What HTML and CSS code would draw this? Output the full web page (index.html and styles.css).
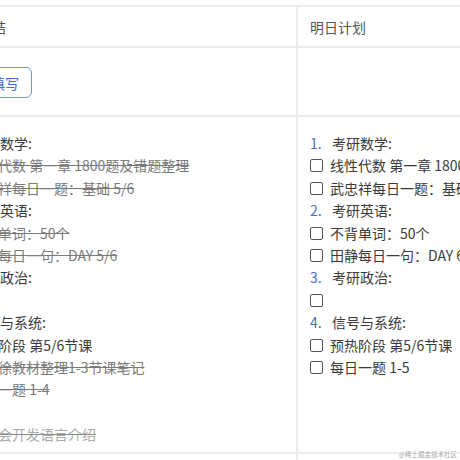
FILE: index.html
```html
<!DOCTYPE html>
<html lang="zh-CN">
<head>
    <meta charset="UTF-8">
    <meta name="viewport" content="width=device-width, initial-scale=1.0">
    <title>学习计划</title>
    <link rel="stylesheet" href="styles.css">
</head>
<body>
    <div class="page">
        <table class="plan">
            <colgroup>
                <col class="col-today">
                <col class="col-tomorrow">
            </colgroup>
            <thead>
                <tr>
                    <th>今日总结</th>
                    <th>明日计划</th>
                </tr>
            </thead>
            <tbody>
                <tr class="action-row">
                    <td><button class="fill-btn" type="button">点击填写</button></td>
                    <td></td>
                </tr>
                <tr class="list-row">
                    <td>
                        <ul class="tasks">
                            <li class="group"><span class="num">1.</span>考研数学:</li>
                            <li class="done"><span class="box checked"></span>线性代数 第一章 1800题及错题整理</li>
                            <li class="done"><span class="box checked"></span>武忠祥每日一题：基础 5/6</li>
                            <li class="group"><span class="num">2.</span>考研英语:</li>
                            <li class="done"><span class="box checked"></span>不背单词：50个</li>
                            <li class="done"><span class="box checked"></span>田静每日一句：DAY 5/6</li>
                            <li class="group"><span class="num">3.</span>考研政治:</li>
                            <li><span class="box"></span></li>
                            <li class="group"><span class="num">4.</span>信号与系统:</li>
                            <li><span class="box"></span>预热阶段 第5/6节课</li>
                            <li class="done"><span class="box checked"></span>对照徐教材整理1-3节课笔记</li>
                            <li class="done"><span class="box checked"></span>每日一题 1-4</li>
                            <li class="group"><span class="num">5.</span>其他</li>
                            <li class="done faded"><span class="box checked"></span>华为会开发语言介绍</li>
                        </ul>
                    </td>
                    <td>
                        <ul class="tasks">
                            <li class="group"><span class="num">1.</span>考研数学:</li>
                            <li><span class="box"></span>线性代数 第一章 1800题及错题整理</li>
                            <li><span class="box"></span>武忠祥每日一题：基础 6/6</li>
                            <li class="group"><span class="num">2.</span>考研英语:</li>
                            <li><span class="box"></span>不背单词：50个</li>
                            <li><span class="box"></span>田静每日一句：DAY 6/6</li>
                            <li class="group"><span class="num">3.</span>考研政治:</li>
                            <li><span class="box"></span></li>
                            <li class="group"><span class="num">4.</span>信号与系统:</li>
                            <li><span class="box"></span>预热阶段 第5/6节课</li>
                            <li><span class="box"></span>每日一题 1-5</li>
                        </ul>
                    </td>
                </tr>
                <tr class="tail-row">
                    <td></td>
                    <td></td>
                </tr>
            </tbody>
        </table>
        <span class="watermark">@稀土掘金技术社区</span>
    </div>
</body>
</html>
```

FILE: styles.css
```css
:root {
    --line-color: #ececec;
    --text-color: #3a3a3a;
    --muted-color: #7a7a7a;
    --blue: #4a6dc2;
    --btn-blue: #3c6fd8;
}

* {
    margin: 0;
    padding: 0;
    box-sizing: border-box;
}

body {
    font-family: "Noto Sans CJK SC", "Noto Sans", sans-serif;
    font-size: 14px;
    color: var(--text-color);
    background: #fff;
    overflow: hidden;
}

.page {
    position: relative;
    width: 460px;
    height: 460px;
    padding-top: 5px;
    overflow: hidden;
}

.plan {
    margin-left: -64px;
    width: 820px;
    table-layout: fixed;
    border-collapse: separate;
    border-spacing: 0;
    border-top: 2px solid var(--line-color);
}

.col-today {
    width: 362px;
}

.plan th,
.plan td {
    text-align: left;
    vertical-align: top;
    font-weight: normal;
    border-bottom: 2px solid var(--line-color);
    padding: 0 13px 0 14px;
}

.plan th:first-child,
.plan td:first-child {
    border-right: 2px solid var(--line-color);
}

.plan th + th,
.plan td + td {
    padding-left: 12px;
}

.plan th {
    line-height: 22px;
    padding-top: 9px;
    padding-bottom: 8px;
    color: #555;
}

.action-row td {
    padding-top: 19px;
    padding-bottom: 17px;
    height: 69px;
}

.fill-btn {
    height: 31px;
    padding: 0 12px;
    font-family: inherit;
    font-size: 14px;
    color: var(--btn-blue);
    background: #fff;
    border: 1px solid #7094de;
    border-radius: 6px;
}

.list-row td {
    padding-top: 15px;
    padding-bottom: 7px;
}

.tail-row td {
    height: 30px;
}

.tasks {
    list-style: none;
    line-height: 22.4px;
    white-space: nowrap;
}

.tasks li {
    height: 22.4px;
}

.num {
    display: inline-block;
    width: 22px;
    color: var(--blue);
}

.box {
    display: inline-block;
    width: 13px;
    height: 13px;
    margin-right: 7px;
    border: 1px solid #555;
    border-radius: 2px;
    vertical-align: -1px;
}

.box.checked {
    background: var(--blue);
    border-color: var(--blue);
}

.done {
    color: var(--muted-color);
    text-decoration: line-through;
}

.faded {
    color: #aaa;
    text-decoration: line-through #888 1px;
}

.watermark {
    position: absolute;
    right: 3px;
    bottom: 2px;
    font-size: 6.5px;
    line-height: 8px;
    color: #a8a8a8;
    background: rgba(255, 255, 255, 0.6);
}
```
